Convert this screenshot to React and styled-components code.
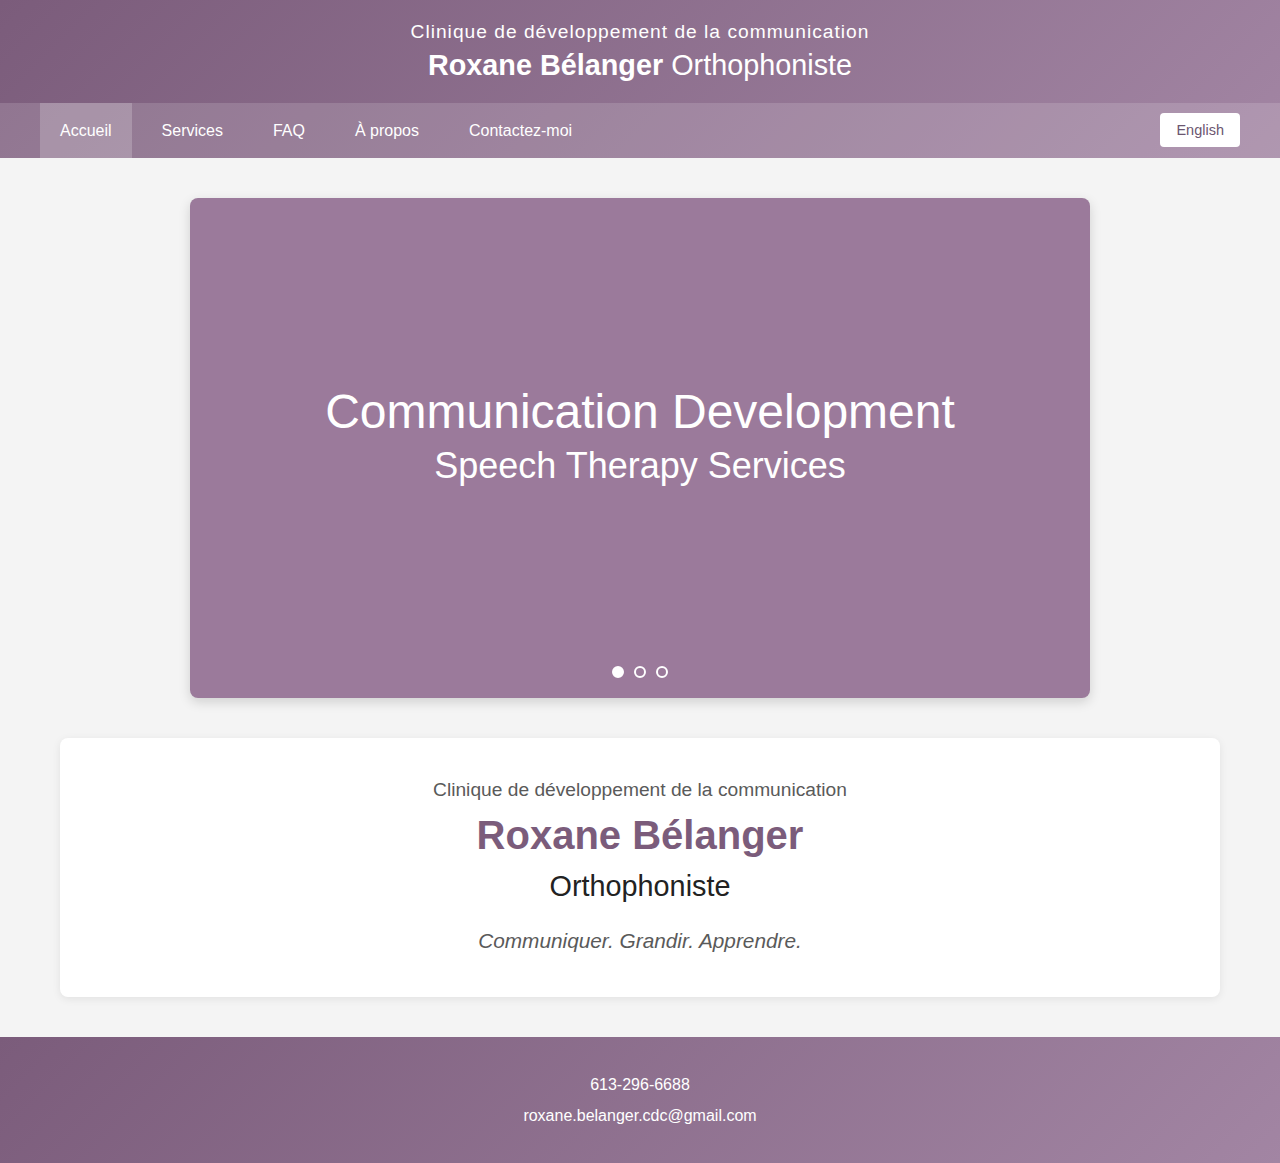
import React from "react"
import styled, { createGlobalStyle } from "styled-components"

const GlobalStyle = createGlobalStyle`
  body {
    margin: 0;
    background: #f4f4f4;
    font-family: "Liberation Sans", Arial, sans-serif;
  }
  * {
    box-sizing: border-box;
  }
`

const navItems = ["Accueil", "Services", "FAQ", "À propos", "Contactez-moi"]

const App = () => {
  return (
    <>
      <GlobalStyle />
      <Header>
        <Masthead>
          <Tagline>Clinique de développement de la communication</Tagline>
          <SiteTitle>
            <strong>Roxane Bélanger</strong> Orthophoniste
          </SiteTitle>
        </Masthead>
        <NavBar>
          <NavList>
            {navItems.map((item, i) => (
              <NavItem key={item} $active={i === 0}>{item}</NavItem>
            ))}
          </NavList>
          <LangButton>English</LangButton>
        </NavBar>
      </Header>

      <Main>
        <Hero>
          <HeroTitle>Communication Development</HeroTitle>
          <HeroSubtitle>Speech Therapy Services</HeroSubtitle>
          <Dots>
            <Dot $active />
            <Dot />
            <Dot />
          </Dots>
        </Hero>

        <IntroCard>
          <IntroClinic>Clinique de développement de la communication</IntroClinic>
          <IntroName>Roxane Bélanger</IntroName>
          <IntroRole>Orthophoniste</IntroRole>
          <IntroMotto>Communiquer. Grandir. Apprendre.</IntroMotto>
        </IntroCard>
      </Main>

      <Footer>
        <FooterLine>613-296-6688</FooterLine>
        <FooterLine>roxane.belanger.cdc@gmail.com</FooterLine>
      </Footer>
    </>
  )
}

const Header = styled.header`
  background: linear-gradient(135deg, #7b5c7b 0%, #a285a3 100%);
  color: #fff;
`

const Masthead = styled.div`
  padding: 20px 0 20px;
  text-align: center;
`

const Tagline = styled.p`
  margin: 0;
  font-size: 19.2px;
  line-height: 23px;
  letter-spacing: 1px;
`

const SiteTitle = styled.h1`
  margin: 5px 0 0;
  font-size: 28.8px;
  line-height: 35px;
  font-weight: normal;

  strong {
    font-weight: bold;
  }
`

const NavBar = styled.nav`
  display: flex;
  align-items: center;
  justify-content: space-between;
  height: 55px;
  padding: 0 40px;
  background: rgba(255, 255, 255, 0.15);
`

const NavList = styled.ul`
  display: flex;
  gap: 10px;
  margin: 0;
  padding: 0;
  list-style: none;
  height: 100%;
`

const NavItem = styled.li`
  padding: 0 20px;
  line-height: 55px;
  font-size: 16px;
  color: #fff;
  background: ${(p) => (p.$active ? "rgba(255, 255, 255, 0.2)" : "transparent")};
  cursor: pointer;
`

const LangButton = styled.button`
  font-family: "Liberation Sans", Arial, sans-serif;
  font-size: 14.5px;
  color: #6b5670;
  background: #fff;
  border: none;
  border-radius: 4px;
  padding: 0 16px;
  height: 34px;
  margin-top: -1px;
  cursor: pointer;
`

const Main = styled.main`
  display: flex;
  flex-direction: column;
  align-items: center;
  gap: 40px;
  padding: 40px 60px;
`

const Hero = styled.section`
  position: relative;
  width: 900px;
  height: 500px;
  display: flex;
  flex-direction: column;
  align-items: center;
  justify-content: center;
  padding-bottom: 24px;
  background: #9b7a9b;
  border-radius: 8px;
  box-shadow: 0 4px 12px rgba(0, 0, 0, 0.15);
  color: #fff;
  text-align: center;
`

const HeroTitle = styled.h2`
  margin: 0 0 4px;
  font-size: 48px;
  line-height: 56px;
  font-weight: normal;
`

const HeroSubtitle = styled.p`
  margin: 0;
  font-size: 36px;
  line-height: 44px;
`

const Dots = styled.div`
  position: absolute;
  left: 0;
  right: 0;
  bottom: 20px;
  display: flex;
  justify-content: center;
  gap: 10px;
`

const Dot = styled.span`
  width: 12px;
  height: 12px;
  border-radius: 50%;
  border: 2px solid #fff;
  background: ${(p) => (p.$active ? "#fff" : "transparent")};
`

const IntroCard = styled.section`
  width: 100%;
  padding: 40px 20px 44px;
  background: #fff;
  border-radius: 8px;
  box-shadow: 0 2px 8px rgba(0, 0, 0, 0.08);
  text-align: center;
`

const IntroClinic = styled.p`
  margin: 0;
  font-size: 19.2px;
  line-height: 24px;
  color: #5a5a5a;
`

const IntroName = styled.h2`
  margin: 9px 0 0;
  font-size: 40px;
  line-height: 48px;
  font-weight: bold;
  color: #7b5c7b;
`

const IntroRole = styled.p`
  margin: 10px 0 0;
  font-size: 28.8px;
  line-height: 34px;
  color: #222;
`

const IntroMotto = styled.p`
  margin: 26px 0 0;
  font-size: 20.8px;
  line-height: 24px;
  font-style: italic;
  color: #5a5a5a;
`

const Footer = styled.footer`
  display: flex;
  flex-direction: column;
  align-items: center;
  gap: 11px;
  padding: 38px 0 37px;
  background: linear-gradient(135deg, #7b5c7b 0%, #a285a3 100%);
  color: #fff;
`

const FooterLine = styled.p`
  margin: 0;
  font-size: 16px;
  line-height: 20px;
`

export default App
